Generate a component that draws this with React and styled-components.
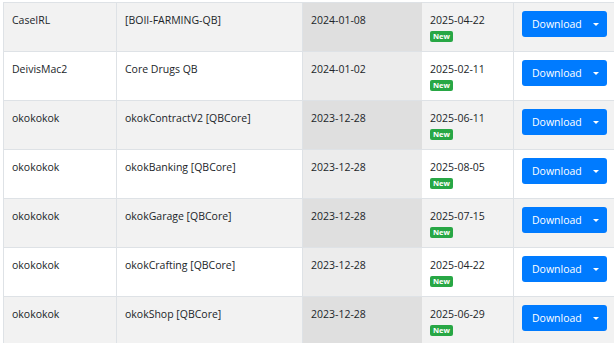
import React from "react";
import styled, { createGlobalStyle } from "styled-components";

const Global = createGlobalStyle`
  html, body { margin: 0; padding: 0; background: #fff; }
  body {
    padding: 2px 0 0 3px;
    font-family: "Open Sans", "Noto Sans", "Liberation Sans", sans-serif;
    font-size: 10.5px;
    color: #212529;
    overflow: hidden;
  }
`;

const Table = styled.table`
  border-collapse: collapse;
  table-layout: fixed;
  width: 614px;
  border-top: 1px solid #dee2e6;
  border-left: 1px solid #dee2e6;
`;

const Row = styled.tr`
  height: 49px;
  background: ${(p) => (p.$striped ? "#f2f2f2" : "#ffffff")};
`;

const Cell = styled.td`
  height: 49px;
  padding: 8px 8px;
  box-sizing: border-box;
  vertical-align: top;
  line-height: 18px;
  border-right: 1px solid #dee2e6;
  border-bottom: 1px solid #dee2e6;
  white-space: nowrap;
  overflow: hidden;
`;

const SortedCell = styled(Cell)`
  background: ${(p) => (p.$striped ? "#dfdfdf" : "#ececec")};
  border-right-color: ${(p) => (p.$striped ? "#dfdfdf" : "#ececec")};
`;

const DateText = styled.div`
  line-height: 18px;
`;

const Badge = styled.span`
  display: block;
  width: fit-content;
  margin-top: 2px;
  padding: 0 3px;
  height: 11px;
  line-height: 11px;
  font-size: 7.5px;
  font-weight: 700;
  color: #fff;
  background: #28a745;
  border-radius: 2px;
`;

const Button = styled.button`
  display: flex;
  align-items: center;
  justify-content: space-between;
  width: 85px;
  height: 26px;
  margin: 0;
  padding: 0 8px 0 10px;
  box-sizing: border-box;
  border: none;
  border-radius: 3px;
  background: #007bff;
  color: #fff;
  font-family: inherit;
  font-size: 10.5px;
  cursor: pointer;
`;

const Caret = styled.span`
  width: 0;
  height: 0;
  border-left: 3px solid transparent;
  border-right: 3px solid transparent;
  border-top: 3px solid #fff;
`;

const rows = [
  ["CaseIRL", "[BOII-FARMING-QB]", "2024-01-08", "2025-04-22"],
  ["DeivisMac2", "Core Drugs QB", "2024-01-02", "2025-02-11"],
  ["okokokok", "okokContractV2 [QBCore]", "2023-12-28", "2025-06-11"],
  ["okokokok", "okokBanking [QBCore]", "2023-12-28", "2025-08-05"],
  ["okokokok", "okokGarage [QBCore]", "2023-12-28", "2025-07-15"],
  ["okokokok", "okokCrafting [QBCore]", "2023-12-28", "2025-04-22"],
  ["okokokok", "okokShop [QBCore]", "2023-12-28", "2025-06-29"],
];

export default function App() {
  return (
    <>
      <Global />
      <Table>
        <colgroup>
          <col style={{ width: 113 }} />
          <col style={{ width: 186 }} />
          <col style={{ width: 119 }} />
          <col style={{ width: 92 }} />
          <col style={{ width: 104 }} />
        </colgroup>
        <tbody>
          {rows.map((r, i) => {
            const striped = i % 2 === 0;
            return (
              <Row key={i} $striped={striped}>
                <Cell>{r[0]}</Cell>
                <Cell>{r[1]}</Cell>
                <SortedCell $striped={striped}>{r[2]}</SortedCell>
                <Cell>
                  <DateText>{r[3]}</DateText>
                  <Badge>New</Badge>
                </Cell>
                <Cell>
                  <Button>
                    <span>Download</span>
                    <Caret />
                  </Button>
                </Cell>
              </Row>
            );
          })}
        </tbody>
      </Table>
    </>
  );
}
